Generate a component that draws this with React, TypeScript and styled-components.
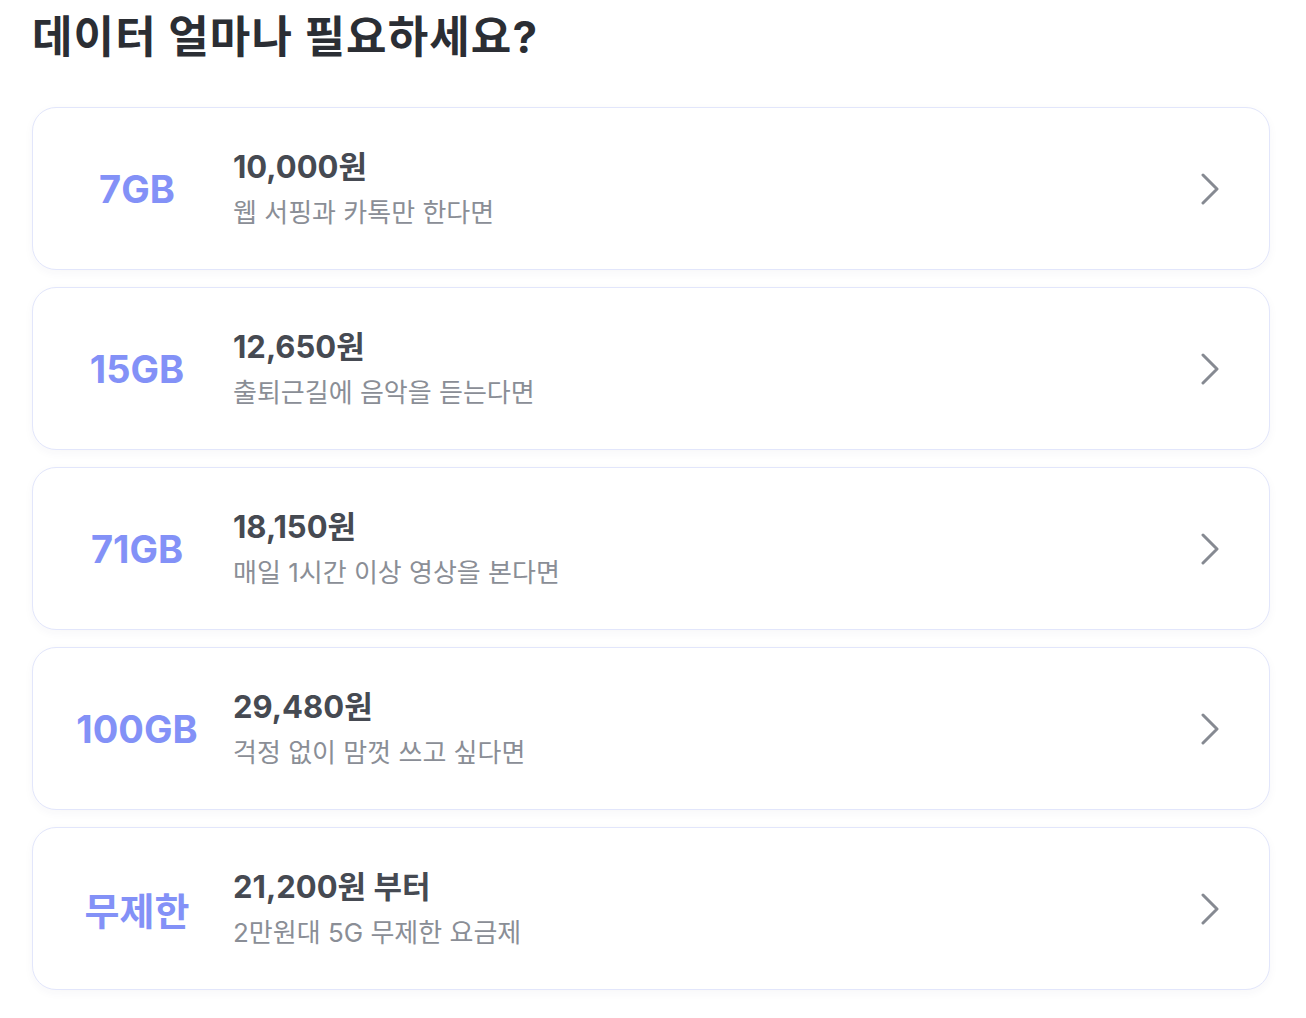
import React from "react";
import styled, { createGlobalStyle } from "styled-components";

const GlobalStyle = createGlobalStyle`
  body {
    margin: 0;
    background: #ffffff;
    font-family: "Inter", "Noto Sans CJK KR", sans-serif;
  }
`;

const Page = styled.div`
  padding: 10px 36px 20px 32px;
`;

const Title = styled.h1`
  margin: 0 0 43px;
  font-size: 44px;
  line-height: 54px;
  font-weight: 700;
  color: #2b2e34;
  letter-spacing: 1.1px;
`;

const List = styled.div`
  display: flex;
  flex-direction: column;
  gap: 17px;
`;

const Card = styled.div`
  height: 161px;
  display: flex;
  align-items: center;
  border: 1px solid #e2e6fb;
  border-radius: 24px;
  background: #ffffff;
  box-shadow: 0 3px 10px rgba(40, 50, 90, 0.04);
  padding: 0 48px 0 8px;
`;

const Amount = styled.div`
  flex: 0 0 192px;
  text-align: center;
  font-size: 38px;
  font-weight: 700;
  color: #8391f7;
`;

const Info = styled.div`
  flex: 1;
  display: flex;
  flex-direction: column;
  gap: 10px;
`;

const Price = styled.div`
  font-size: 31px;
  line-height: 38px;
  font-weight: 700;
  color: #464a52;
`;

const Desc = styled.div`
  font-size: 26px;
  line-height: 34px;
  font-weight: 400;
  color: #8a8e96;
`;

const Chevron = () => (
  <svg width="22" height="32" viewBox="0 0 22 32" fill="none">
    <path
      d="M4 2 L18 16 L4 30"
      stroke="#868a92"
      strokeWidth="3"
      strokeLinecap="round"
      strokeLinejoin="round"
    />
  </svg>
);

const plans = [
  { amount: "7GB", price: "10,000원", desc: "웹 서핑과 카톡만 한다면" },
  { amount: "15GB", price: "12,650원", desc: "출퇴근길에 음악을 듣는다면" },
  { amount: "71GB", price: "18,150원", desc: "매일 1시간 이상 영상을 본다면" },
  { amount: "100GB", price: "29,480원", desc: "걱정 없이 맘껏 쓰고 싶다면" },
  { amount: "무제한", price: "21,200원 부터", desc: "2만원대 5G 무제한 요금제" },
];

const App = () => {
  return (
    <Page>
      <GlobalStyle />
      <Title>데이터 얼마나 필요하세요?</Title>
      <List>
        {plans.map((p) => (
          <Card key={p.amount}>
            <Amount>{p.amount}</Amount>
            <Info>
              <Price>{p.price}</Price>
              <Desc>{p.desc}</Desc>
            </Info>
            <Chevron />
          </Card>
        ))}
      </List>
    </Page>
  );
};

export default App;
